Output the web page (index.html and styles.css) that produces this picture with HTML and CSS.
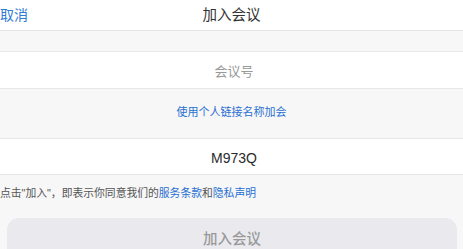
FILE: index.html
```html
<!DOCTYPE html>
<html lang="zh-CN">
<head>
    <meta charset="UTF-8">
    <meta name="viewport" content="width=device-width, initial-scale=1.0">
    <title>加入会议</title>
    <link rel="stylesheet" href="styles.css">
</head>
<body>
    <div class="page">
        <div class="nav-bar">
            <a class="nav-cancel" href="#">取消</a>
            <div class="nav-title">加入会议</div>
            <div></div>
        </div>

        <div class="gap-band"></div>

        <!-- Meeting number input -->
        <div class="field-row">
            <span class="placeholder">会议号</span>
        </div>

        <div class="link-band">
            <a class="personal-link" href="#">使用个人链接名称加会</a>
        </div>

        <!-- Display name -->
        <div class="field-row name-row">
            <span class="field-value">M973Q</span>
        </div>

        <div class="terms">
            点击"加入"，即表示你同意我们的<a href="#">服务条款</a>和<a href="#">隐私声明</a>
        </div>

        <div class="join-wrap">
            <button class="join-btn" disabled>加入会议</button>
        </div>
    </div>
</body>
</html>
```

FILE: styles.css
```css
* {
    margin: 0;
    padding: 0;
    box-sizing: border-box;
}

html, body {
    font-family: 'Liberation Sans', 'Noto Sans CJK SC', sans-serif;
    background: #f7f7f7;
    color: #333;
    overflow: hidden;
}

a {
    text-decoration: none;
}

.page {
    width: 463px;
    height: 249px;
    overflow: hidden;
}

.nav-bar {
    height: 31px;
    background: #fff;
    border-bottom: 1px solid #e6e6e6;
    display: grid;
    grid-template-columns: 1fr auto 1fr;
    align-items: center;
    padding-bottom: 3px;
}

.nav-cancel {
    font-size: 14px;
    color: #2f7bd6;
}

.nav-title {
    font-size: 14.5px;
    color: #333;
}

.gap-band {
    height: 20px;
}

.field-row {
    height: 38px;
    background: #fff;
    border-top: 1px solid #e8e8e8;
    border-bottom: 1px solid #e8e8e8;
    display: flex;
    align-items: center;
    justify-content: center;
    padding-left: 5px;
}

.placeholder {
    font-size: 13px;
    color: #999;
}

.link-band {
    height: 49px;
    display: flex;
    align-items: center;
    justify-content: center;
    padding-bottom: 5px;
}

.personal-link {
    font-size: 11px;
    color: #2a6fd3;
}

.name-row {
    height: 37px;
    padding-top: 2px;
}

.field-value {
    font-size: 14px;
    color: #2a2a2a;
}

.terms {
    font-size: 10.8px;
    color: #555;
    padding-top: 9px;
    height: 43px;
}

.terms a {
    color: #2a6fd3;
}

.join-wrap {
    padding: 0 6px 0 7px;
}

.join-btn {
    width: 100%;
    height: 44px;
    border: none;
    border-radius: 12px;
    background: #e9e9ee;
    font-family: 'Liberation Sans', 'Noto Sans CJK SC', sans-serif;
    font-size: 14.5px;
    font-weight: 500;
    color: #999;
    padding-bottom: 6px;
}
```
